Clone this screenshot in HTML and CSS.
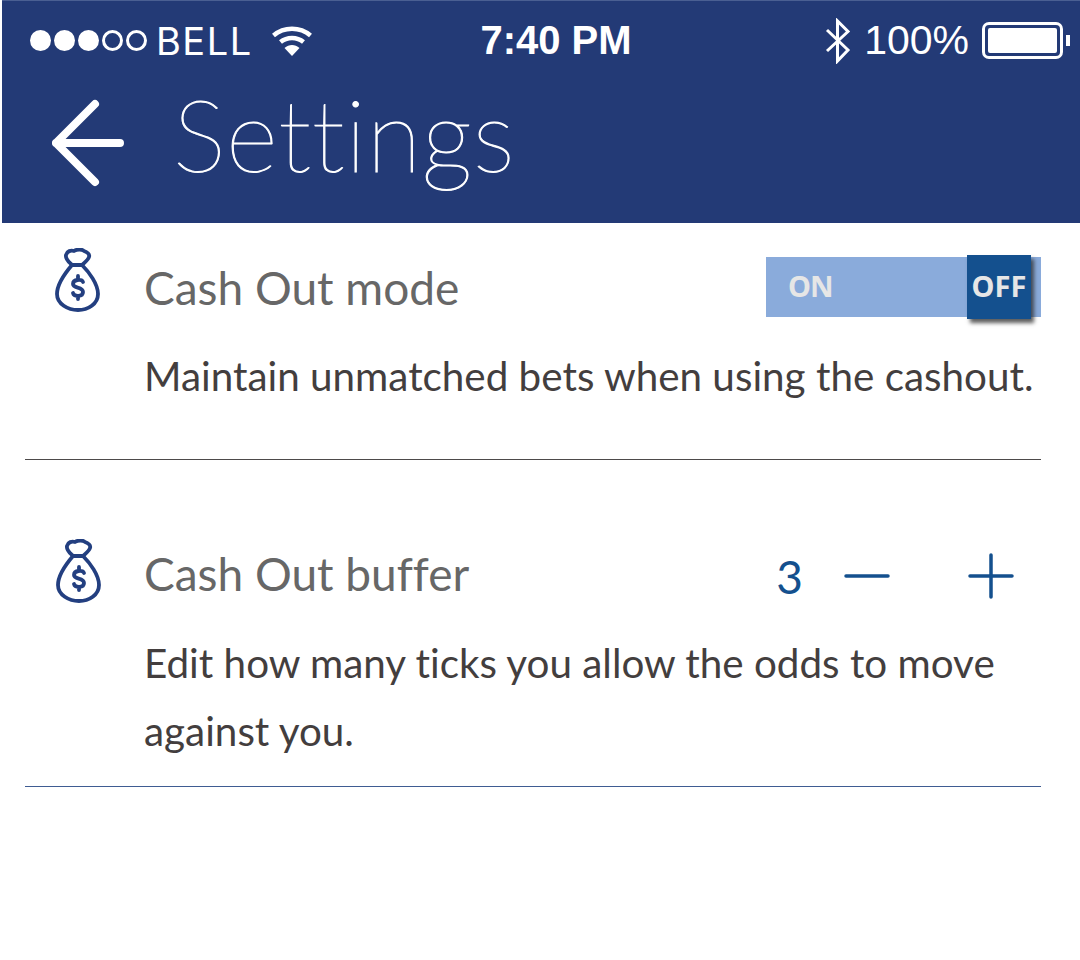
FILE: index.html
```html
<!DOCTYPE html>
<html lang="en">
<head>
<meta charset="utf-8">
<title>Settings</title>
<link rel="stylesheet" href="styles.css">
</head>
<body>
<svg class="defs" width="0" height="0" aria-hidden="true">
  <symbol id="bag" viewBox="0 0 46 64">
    <path class="bag-line" d="M18 17 C15 14 11 11 12 7 C13 3 17 2 20 3 C23 1 28 1 30 3 C33 4 36 6 35 9 C34 12 31 14 28 17 Z"/>
    <path class="bag-line" d="M18 17 C12 24 3 36 3 46 C3 56 14 62 24 62 C34 62 44 56 44 46 C44 36 35 24 28 17"/>
    <path class="bag-line thin" d="M29 34 C28 31 19 31 19 36 C19 41 29 38 29 44 C29 49 20 49 19 45 M24 28 L24 31 M24 48 L24 51"/>
  </symbol>
</svg>
<main class="screen">
  <header class="header">
    <div class="status">
      <div class="status-left">
        <span class="signal">
          <i class="dot"></i><i class="dot"></i><i class="dot"></i><i class="dot empty"></i><i class="dot empty"></i>
        </span>
        <span class="carrier">BELL</span>
        <svg class="wifi" viewBox="0 0 42 32">
          <path class="wifi-arc" d="M2.500 10.500 C13 1.500 29 1.500 39.500 10.500"/>
          <path class="wifi-arc" d="M9.500 17 C16 11.500 26 11.500 32.500 17"/>
          <path class="wifi-fill" d="M13.500 23 C18 19 24 19 28.500 23 L21 31 Z"/>
        </svg>
      </div>
      <div class="time">7:40 PM</div>
      <div class="status-right">
        <svg class="bt" viewBox="0 0 26 46">
          <path class="bt-line" d="M2 12 L23 32 L12.500 43 L12.500 3 L23 13.500 L2 33"/>
        </svg>
        <span class="battery-text">100%</span>
        <span class="battery"><span class="battery-fill"></span></span>
        <span class="battery-tip"></span>
      </div>
    </div>
    <div class="title-row">
      <svg class="back" viewBox="0 0 76 88">
        <path class="back-line" d="M68 44 L4 44 M43 5 L4 44 L43 83"/>
      </svg>
      <h1 class="title">Settings</h1>
    </div>
  </header>

  <section class="row row-one">
    <svg class="bag"><use href="#bag"/></svg>
    <div class="row-body">
      <div class="row-head">
        <h2 class="row-title">Cash Out mode</h2>
        <div class="toggle">
          <span class="toggle-on">ON</span>
          <span class="toggle-off">OFF</span>
        </div>
      </div>
      <p class="row-desc">Maintain unmatched bets when using the cashout.</p>
    </div>
  </section>

  <section class="row row-two">
    <svg class="bag bag-shift"><use href="#bag"/></svg>
    <div class="row-body">
      <div class="row-head">
        <h2 class="row-title">Cash Out buffer</h2>
        <div class="stepper">
          <span class="step-value">3</span>
          <svg class="step-icon" viewBox="0 0 46 46"><path class="step-line" d="M2 23 L44 23"/></svg>
          <svg class="step-icon" viewBox="0 0 46 46"><path class="step-line" d="M2 23 L44 23 M23 2 L23 44"/></svg>
        </div>
      </div>
      <p class="row-desc">Edit how many ticks you allow the odds to move against you.</p>
    </div>
  </section>
</main>
</body>
</html>
```
FILE: styles.css
```css
* { box-sizing: border-box; }
html, body { margin: 0; padding: 0; background: #fff; }
.defs { position: absolute; }
.screen { width: 1080px; height: 960px; overflow: hidden; background: #fff; }

.header {
  height: 223px;
  margin-left: 2px;
  background: #233a76;
  border-top: 1px solid #4a5f92;
  color: #fff;
}
.status {
  height: 79px;
  display: grid;
  grid-template-columns: 1fr auto 1fr;
  align-items: center;
  padding: 0 10px 0 28px;
}
.status-left, .status-right { display: flex; align-items: center; }
.status-right { justify-content: flex-end; }
.signal { display: flex; gap: 3px; }
.dot { width: 21px; height: 21px; border-radius: 50%; background: #fff; }
.dot.empty { background: none; border: 3px solid #fff; }
.carrier { font: 400 38px "Inter", sans-serif; letter-spacing: 1.500px; margin-left: 9px; }
.wifi { width: 42px; height: 32px; margin-left: 18px; }
.wifi-arc { fill: none; stroke: #fff; stroke-width: 4.500; }
.wifi-fill { fill: #fff; }
.time { font: 700 40px "Liberation Sans", sans-serif; margin-left: 12px; }
.bt { width: 26px; height: 46px; margin-right: 13px; }
.bt-line { fill: none; stroke: #fff; stroke-width: 3; }
.battery-text { font: 400 41px "Liberation Sans", sans-serif; margin-right: 13px; }
.battery {
  width: 81px; height: 37px; padding: 3px;
  border: 3px solid #fff; border-radius: 7px;
  display: flex;
}
.battery-fill { flex: 1; background: #fff; border-radius: 2px; }
.battery-tip { width: 4px; height: 11px; background: #fff; margin-left: 3px; }

.title-row { display: flex; align-items: center; height: 121px; padding-left: 50px; }
.back { width: 76px; height: 88px; margin-top: 5px; }
.back-line { fill: none; stroke: #fff; stroke-width: 8; stroke-linecap: round; stroke-linejoin: round; }
.title {
  margin: -14px 0 0 45px;
  font: 100 100px "Lato", sans-serif;
  line-height: 121px;
  letter-spacing: .7px;
  -webkit-text-stroke: 1px #fff;
}

.row { display: flex; margin: 0 39px 0 25px; }
.row-one { height: 237px; border-bottom: 1px solid #4d4a4a; padding-top: 25px; }
.row-two { height: 327px; border-bottom: 1px solid #3f5c92; padding-top: 78px; }
.bag { width: 46px; height: 64px; flex: none; margin-left: 29px; }
.bag-shift { margin: 1px -1px 0 30px; }
.bag-line { fill: none; stroke: #233f80; stroke-width: 3.800; stroke-linejoin: round; stroke-linecap: round; }
.bag-line.thin { stroke-width: 3.800; }
.row-body { flex: 1; margin-left: 44px; }
.row-head { display: flex; justify-content: space-between; align-items: center; height: 70px; margin-top: 4px; }
.row-two .row-head { margin-top: 0; }
.row-title { margin: 0; font: 400 46px "Lato", sans-serif; color: #676767; font-variant-ligatures: none; }
.row-desc { margin: 20px 0 0; font: 400 40.400px/68px "Lato", sans-serif; color: #433e3e; font-variant-ligatures: none; }
.row-two .row-desc { margin-top: 21px; }

.toggle {
  width: 275px; height: 60px;
  background: #8aabdb;
  display: flex; justify-content: space-between; align-items: center;
  padding-left: 22px; padding-right: 10px;
}
.toggle-on { font: 700 29px "Noto Sans", sans-serif; letter-spacing: -1px; color: #e6e6e6; padding-bottom: 3px; }
.toggle-off {
  width: 64px; height: 64px;
  background: #14508e;
  box-shadow: 3px 4px 4px rgba(40, 40, 40, .75);
  display: flex; align-items: center; justify-content: center;
  font: 700 29px "Noto Sans", sans-serif; color: #e6e6e6;
  padding-bottom: 3px;
}
.stepper { display: flex; align-items: center; margin: 6px 27px 0 0; }
.step-value { font: 400 46px "Lato", sans-serif; color: #14508e; margin-right: 41px; }
.step-icon { width: 46px; height: 46px; }
.step-icon + .step-icon { margin-left: 78px; }
.step-line { fill: none; stroke: #14508e; stroke-width: 3.500; stroke-linecap: round; }
```
